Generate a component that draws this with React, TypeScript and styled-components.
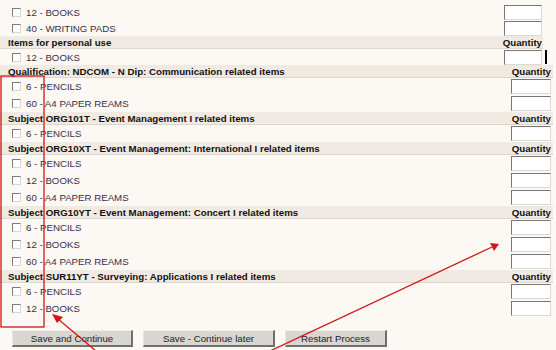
import React from "react";
import styled, { createGlobalStyle } from "styled-components";

const Global = createGlobalStyle`
  html, body { margin: 0; padding: 0; background: #fcf9f5; }
  body { font-family: "Liberation Sans", Arial, sans-serif; }
`;

const Page = styled.div`
  position: relative;
  width: 556px;
  height: 350px;
  overflow: hidden;
  padding-top: 4px;
  box-sizing: border-box;
  font-family: "Liberation Sans", Arial, sans-serif;
  background: #fcf9f5;
`;

const Section = styled.div<{ $w: number }>`
  width: ${(p) => p.$w}px;
  display: flex;
  flex-direction: column;
`;

const Header = styled.div<{ $pr: number }>`
  height: 13px;
  box-sizing: border-box;
  display: flex;
  align-items: center;
  justify-content: space-between;
  padding: 0 ${(p) => p.$pr}px 0 8px;
  background: #f1eae3;
  border-bottom: 1px solid #e0d5cb;
  font-size: 9.7px;
  font-weight: bold;
  color: #111;
  white-space: nowrap;
`;

const Row = styled.div<{ $h: number; $pr: number }>`
  position: relative;
  height: ${(p) => p.$h}px;
  display: flex;
  align-items: center;
  justify-content: space-between;
  padding-right: ${(p) => p.$pr}px;
`;

const Label = styled.label`
  display: flex;
  align-items: center;
  gap: 5px;
  padding-left: 12px;
  font-size: 9.7px;
  color: #382d4a;
  white-space: nowrap;
`;

const Check = styled.span`
  display: inline-block;
  width: 9px;
  height: 9px;
  box-sizing: border-box;
  border: 1px solid;
  border-color: #7c7c7c #d6d6d6 #d6d6d6 #7c7c7c;
  background: #fff;
`;

const QtyWrap = styled.span`
  position: relative;
  display: inline-flex;
`;

const Qty = styled.input<{ $w: number }>`
  width: ${(p) => p.$w}px;
  height: 15px;
  box-sizing: border-box;
  margin: 0;
  padding: 0;
  border: 1px solid;
  border-color: #777 #dcd9d4 #dcd9d4 #777;
  background: #fff;
  outline: none;
`;

const Caret = styled.span`
  position: absolute;
  left: 100%;
  top: 0;
  margin-left: 3px;
  width: 2px;
  height: 14px;
  background: #000;
`;

const Buttons = styled.div`
  display: flex;
  gap: 10px;
  margin-top: 13px;
  padding-left: 12px;
`;

const Button = styled.button<{ $w: number }>`
  width: ${(p) => p.$w}px;
  height: 17px;
  box-sizing: border-box;
  margin: 0;
  padding: 0;
  background: #d9d5d0;
  border-style: solid;
  border-width: 1px 2px 2px 1px;
  border-color: #f2efeb #6f6f6f #6f6f6f #e8e4e0;
  font-family: "Liberation Sans", Arial, sans-serif;
  font-size: 9.7px;
  color: #1c1c1c;
`;

const Overlay = styled.svg`
  position: absolute;
  left: 0;
  top: 0;
  pointer-events: none;
`;

type Group = { title: string; items: string[] };

const upperTop = ["12 - BOOKS", "40 - WRITING PADS"];

const groups: Group[] = [
  {
    title: "Qualification: NDCOM - N Dip: Communication related items",
    items: ["6 - PENCILS", "60 - A4 PAPER REAMS"],
  },
  {
    title: "Subject ORG101T - Event Management I related items",
    items: ["6 - PENCILS"],
  },
  {
    title: "Subject ORG10XT - Event Management: International I related items",
    items: ["6 - PENCILS", "12 - BOOKS", "60 - A4 PAPER REAMS"],
  },
  {
    title: "Subject ORG10YT - Event Management: Concert I related items",
    items: ["6 - PENCILS", "12 - BOOKS", "60 - A4 PAPER REAMS"],
  },
  {
    title: "Subject SUR11YT - Surveying: Applications I related items",
    items: ["6 - PENCILS", "12 - BOOKS"],
  },
];

function Item({
  text,
  h,
  pr,
  w,
  caret,
}: {
  text: string;
  h: number;
  pr: number;
  w: number;
  caret?: boolean;
}) {
  return (
    <Row $h={h} $pr={pr}>
      <Label>
        <Check />
        {text}
      </Label>
      <QtyWrap>
        <Qty $w={w} type="text" />
        {caret && <Caret />}
      </QtyWrap>
    </Row>
  );
}

export default function App() {
  return (
    <>
      <Global />
      <Page>
        <Section $w={543}>
          {upperTop.map((t, i) => (
            <Item key={i} text={t} h={16} pr={1} w={38} />
          ))}
          <Header $pr={1}>
            <span>Items for personal use</span>
            <span>Quantity</span>
          </Header>
          <Item text="12 - BOOKS" h={16} pr={1} w={38} caret />
        </Section>
        <Section $w={553}>
          {groups.map((g, gi) => (
            <React.Fragment key={gi}>
              <Header $pr={2}>
                <span>{g.title}</span>
                <span>Quantity</span>
              </Header>
              {g.items.map((t, i) => (
                <Item key={i} text={t} h={17} pr={2} w={40} />
              ))}
            </React.Fragment>
          ))}
        </Section>
        <Buttons>
          <Button $w={121}>Save and Continue</Button>
          <Button $w={132}>Save - Continue later</Button>
          <Button $w={102}>Restart Process</Button>
        </Buttons>
        <Overlay width={556} height={350} viewBox="0 0 556 350">
          <rect x={1} y={76} width={43} height={251} fill="none" stroke="#cc1414" strokeWidth={1.3} />
          <line x1={96} y1={351} x2={58} y2={319} stroke="#d41515" strokeWidth={1.3} />
          <polygon points="52,314 63,317 57,323" fill="#d41515" />
          <line x1={270} y1={351} x2={492} y2={247} stroke="#d41515" strokeWidth={1.3} />
          <polygon points="499,244 490,243 494,251" fill="#d41515" />
        </Overlay>
      </Page>
    </>
  );
}
